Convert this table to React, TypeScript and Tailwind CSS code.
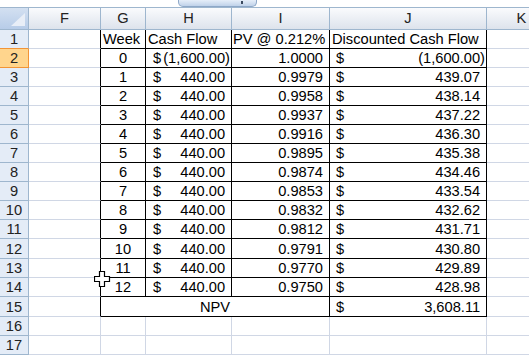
import React from "react";

/* Excel 2007-style sheet: columns F..K, rows 1..17 */

const GRID = "border-r-[#d0d7e5]";
const GRIDB = "border-b-[#d0d7e5]";

const data = [
  { w: "0", cf: "(1,600.00)", pv: "1.0000", dcf: "(1,600.00)" },
  { w: "1", cf: "440.00", pv: "0.9979", dcf: "439.07" },
  { w: "2", cf: "440.00", pv: "0.9958", dcf: "438.14" },
  { w: "3", cf: "440.00", pv: "0.9937", dcf: "437.22" },
  { w: "4", cf: "440.00", pv: "0.9916", dcf: "436.30" },
  { w: "5", cf: "440.00", pv: "0.9895", dcf: "435.38" },
  { w: "6", cf: "440.00", pv: "0.9874", dcf: "434.46" },
  { w: "7", cf: "440.00", pv: "0.9853", dcf: "433.54" },
  { w: "8", cf: "440.00", pv: "0.9832", dcf: "432.62" },
  { w: "9", cf: "440.00", pv: "0.9812", dcf: "431.71" },
  { w: "10", cf: "440.00", pv: "0.9791", dcf: "430.80" },
  { w: "11", cf: "440.00", pv: "0.9770", dcf: "429.89" },
  { w: "12", cf: "440.00", pv: "0.9750", dcf: "428.98" },
];

// rows 12 and 15 are a pixel taller in the capture
const tall = (n: number) => n === 12 || n === 15;

function RowHead({ n }: { n: number }) {
  const active = n === 2;
  const orangeBottom = n === 1 || n === 2;
  return (
    <div
      className={`flex w-[29px] shrink-0 justify-center border-r border-b leading-[18px] text-[#222] ${
        tall(n) ? "items-end" : "items-center"
      } ${active ? "bg-[#ffd58d] border-r-[#f29436]" : "bg-[#e4ecf7] border-r-[#9eb6ce]"} ${
        orangeBottom ? "border-b-[#f29436]" : "border-b-[#9eb6ce]"
      }`}
    >
      {n}
    </div>
  );
}

function Money({ value, left, right }: { value: string; left: string; right: string }) {
  const neg = value.startsWith("(");
  return (
    <div className={`flex w-full justify-between ${left} ${right}`}>
      <span>$</span>
      <span>
        {value}
        {!neg && <span className="invisible">)</span>}
      </span>
    </div>
  );
}

function Row({ n, children }: { n: number; children: React.ReactNode }) {
  return (
    <div className={`flex ${tall(n) ? "h-[20px]" : "h-[19px]"}`}>
      <RowHead n={n} />
      {children}
    </div>
  );
}

export default function App() {
  const align = (n: number) => (tall(n) ? "items-end" : "items-center");

  return (
    <div className="relative h-[355px] w-[529px] overflow-hidden bg-white font-['Liberation_Sans',Arial,sans-serif] text-[14.67px] leading-[18px] text-black">
      {/* bottom edge of the formula bar */}
      <div className="relative h-[8px] border-b border-[#9eb6ce] bg-white">
        <div className="absolute left-[178px] top-0 h-[7px] w-[79px] rounded-b-[5px] border border-t-0 border-[#8ea8c8] bg-linear-to-b from-[#e6eef9] to-[#c0d2e9]">
          <span className="absolute left-[62px] top-[1px] h-[3px] w-[2px] bg-[#3a4a60]" />
        </div>
      </div>

      {/* column headers */}
      <div className="flex h-[22px] text-[#222]">
        <div className="relative w-[29px] shrink-0 border-r border-b border-[#9eb6ce] bg-linear-to-b from-[#d3e0f1] to-[#b7cce8]">
          <svg width="28" height="21" viewBox="0 0 28 21" className="absolute left-0 top-0">
            <path d="M25 5 L25 18 L11 18 Z" fill="#e8eef7" />
          </svg>
        </div>
        {[
          ["F", "w-[72px]"],
          ["G", "w-[45px]"],
          ["H", "w-[86px]"],
          ["I", "w-[98px]"],
          ["J", "w-[157px]"],
          ["K", "w-[70px]"],
        ].map(([k, w]) => (
          <div
            key={k}
            className={`flex ${w} shrink-0 items-center justify-center border-r border-b border-[#9eb6ce] bg-linear-to-b from-[#fafbfd] to-[#dde3ec] leading-[21px]`}
          >
            {k}
          </div>
        ))}
      </div>

      {/* row 1: titles */}
      <Row n={1}>
        <div className={`w-[72px] shrink-0 border-r border-b border-r-black ${GRIDB}`} />
        <div className="flex w-[45px] shrink-0 items-center border-r border-b border-black pl-[2px]">Week</div>
        <div className="flex w-[86px] shrink-0 items-center border-r border-b border-black pl-[2px]">Cash Flow</div>
        <div className="flex w-[98px] shrink-0 items-center whitespace-nowrap border-r border-b border-black pl-[1px]">
          PV @ 0.212%
        </div>
        <div className="flex w-[157px] shrink-0 items-center border-r border-b border-black pl-[2px]">
          Discounted Cash Flow
        </div>
        <div className={`w-[70px] shrink-0 border-r border-b ${GRID} ${GRIDB}`} />
      </Row>

      {/* rows 2-14: weekly cash flows */}
      {data.map((d, i) => {
        const n = i + 2;
        return (
          <Row key={n} n={n}>
            <div className={`w-[72px] shrink-0 border-r border-b border-r-black ${GRIDB}`} />
            <div className={`flex w-[45px] shrink-0 justify-center border-r border-b border-black ${align(n)}`}>
              {d.w}
            </div>
            <div className={`flex w-[86px] shrink-0 border-r border-b border-black ${align(n)}`}>
              <Money value={d.cf} left="pl-[7px]" right="pr-[1px]" />
            </div>
            <div className={`flex w-[98px] shrink-0 justify-end border-r border-b border-black pr-[6px] ${align(n)}`}>
              {d.pv}
            </div>
            <div className={`flex w-[157px] shrink-0 border-r border-b border-black ${align(n)}`}>
              <Money value={d.dcf} left="pl-[6px]" right="pr-[1px]" />
            </div>
            <div className={`w-[70px] shrink-0 border-r border-b ${GRID} ${GRIDB}`} />
          </Row>
        );
      })}

      {/* row 15: NPV (G:I merged) */}
      <Row n={15}>
        <div className={`w-[72px] shrink-0 border-r border-b border-r-black ${GRIDB}`} />
        <div className="flex w-[229px] shrink-0 items-end justify-center border-r border-b border-black">NPV</div>
        <div className="flex w-[157px] shrink-0 items-end border-r border-b border-black">
          <Money value="3,608.11" left="pl-[6px]" right="pr-[1px]" />
        </div>
        <div className={`w-[70px] shrink-0 border-r border-b ${GRID} ${GRIDB}`} />
      </Row>

      {/* rows 16-17: empty */}
      {[16, 17].map((n) => (
        <Row key={n} n={n}>
          {["w-[72px]", "w-[45px]", "w-[86px]", "w-[98px]", "w-[157px]", "w-[70px]"].map((w) => (
            <div key={w} className={`${w} shrink-0 border-r border-b ${GRID} ${GRIDB}`} />
          ))}
        </Row>
      ))}

      {/* cell-select cursor */}
      <svg width="17" height="16" viewBox="0 0 17 16" className="absolute left-[94px] top-[271px]">
        <path d="M5.5 0.5h5v5h5v5h-5v5h-5v-5h-5v-5h5z" fill="#fff" stroke="#000" strokeWidth="1.2" />
      </svg>
    </div>
  );
}
